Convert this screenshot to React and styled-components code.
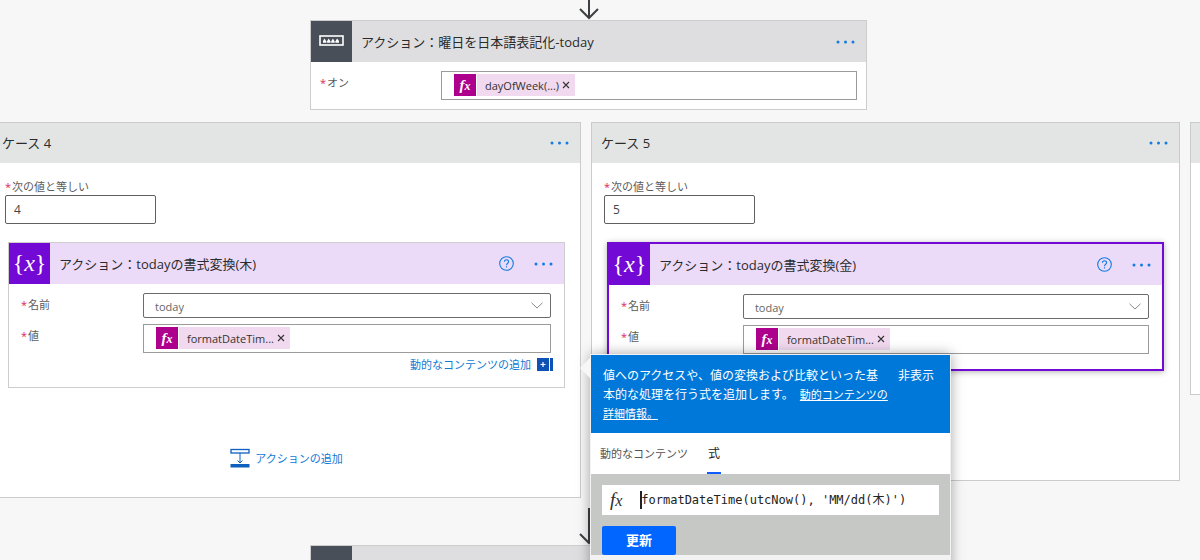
import { useState } from "react";
import styled, { createGlobalStyle, css } from "styled-components";

const GlobalStyle = createGlobalStyle`
  *, *::before, *::after {
    box-sizing: border-box;
  }

  body {
    margin: 0;
    background: #f7f7f7;
    color: #2b2b2b;
    font-family: "Open Sans", "Noto Sans CJK JP", sans-serif;
    font-size: 11px;
  }

  button, input, select {
    font: inherit;
    color: inherit;
  }
`;

const Canvas = styled.main`
  display: flex;
  flex-direction: column;
  height: 100vh;
  overflow: hidden;
`;

const Center = styled.div`
  display: flex;
  flex-direction: column;
  align-items: center;
  flex-shrink: 0;
  padding-right: 23px;
`;

const TopStep = styled.div`
  width: 100%;
  max-width: 557px;
`;

const Arrow = styled.svg`
  display: block;
  width: 20px;
  height: ${(props) => props.$height}px;
  margin-top: ${(props) => props.$gap || 0}px;
  fill: none;
  stroke: #3d3f44;
  stroke-width: 2;
`;

const Cases = styled.section`
  display: flex;
  align-items: flex-start;
  flex-shrink: 0;
  gap: 10px;
  margin: 12px 0 0 -8px;
`;

const CaseBox = styled.article`
  flex: 0 0 calc(49% - 3px);
  min-width: 0;
  border: 1px solid #cbcbcb;
  background: #fff;
`;

const CaseHeader = styled.header`
  display: flex;
  align-items: center;
  justify-content: space-between;
  height: 40px;
  padding: 0 11px 0 9px;
  background: #e3e5e4;
`;

const Title = styled.h2`
  flex: 1;
  margin: 0;
  font-size: 13px;
  font-weight: 400;
  line-height: 20px;
  white-space: nowrap;
`;

const CaseBody = styled.div`
  padding: 16px 15px 28px;
`;

const DefaultBody = styled.div`
  min-height: 231px;
`;

const Condition = styled.div`
  width: 151px;
  margin: 0 0 18px -3px;
`;

const Label = styled.label`
  display: block;
  color: #5c5c5c;
  line-height: ${(props) => props.$line || 24}px;
  white-space: nowrap;

  &::before {
    content: "*";
    margin-right: 1px;
    color: #d9265a;
  }
`;

const TextInput = styled.input`
  display: block;
  width: 100%;
  height: 29px;
  padding: 0 8px;
  border: 1px solid #5f5f5f;
  border-radius: 2px;
  background: #fff;
  color: #444;
  font-size: 12px;
`;

const Card = styled.article`
  position: relative;
  border: 1px solid #cdcdcd;
  background: #fff;

  ${(props) =>
    props.$selected &&
    css`
      border: 2px solid #7209d4;
      box-shadow: 0 1px 6px rgba(0, 0, 0, 0.3);
    `}
`;

const CardHeader = styled.header`
  display: flex;
  align-items: center;
  height: 41px;
  padding-right: 11px;
  background: ${(props) => (props.$purple ? "#ebdbf8" : "#dedee0")};
`;

const CardIcon = styled.div`
  display: flex;
  align-items: center;
  justify-content: center;
  flex-shrink: 0;
  width: 41px;
  height: 41px;
  margin-right: 9px;
  background: ${(props) => (props.$purple ? "#7209d4" : "#484f59")};
  color: #fff;
  font-family: "Liberation Serif", serif;
  font-size: 24px;
  line-height: 30px;
  padding-bottom: 2px;
`;

const IconButton = styled.button`
  display: flex;
  margin: 0 0 0 20px;
  padding: 0;
  border: 0;
  background: none;
  color: #147ce0;
  cursor: pointer;
`;

const CardBody = styled.div`
  display: grid;
  grid-template-columns: ${(props) => props.$labelWidth}px 1fr;
  row-gap: 6px;
  padding: ${(props) => props.$padding};
`;

const SelectWrap = styled.div`
  display: grid;
  align-items: center;

  & > * {
    grid-area: 1 / 1;
  }

  svg {
    justify-self: end;
    margin-right: 8px;
    pointer-events: none;
  }
`;

const Select = styled.select`
  width: 100%;
  height: 25px;
  padding: 2px 11px 0;
  appearance: none;
  border: 1px solid #6b6b6b;
  border-radius: 2px;
  background: #fff;
  color: #666;
`;

const TokenField = styled.div`
  display: flex;
  height: 29px;
  padding: 2px 12px;
  border: 1px solid #9b9b9b;
  background: #fff;
`;

const Token = styled.span`
  display: flex;
  align-items: center;
  height: 22px;
  background: #f1d9ef;
  color: #333;
  white-space: nowrap;
`;

const TokenIcon = styled.span`
  display: flex;
  align-items: center;
  justify-content: center;
  width: 23px;
  height: 22px;
  margin-right: 8px;
  border-right: 1px solid #fff;
  background: #ad008c;
  color: #fff;
`;

const Remove = styled.button`
  display: flex;
  margin: 0 4px 0 2px;
  padding: 1px;
  border: 0;
  background: none;
  cursor: pointer;
`;

const Fx = styled.span`
  font-family: "Liberation Serif", serif;
  font-size: ${(props) => props.$size}px;
  font-style: italic;
  font-weight: ${(props) => (props.$bold ? 700 : 400)};
  line-height: 20px;

  small {
    font-size: ${(props) => props.$size - 3}px;
  }
`;

const AddContent = styled.button`
  display: flex;
  align-items: center;
  gap: 6px;
  grid-column: 1 / -1;
  justify-self: end;
  height: 22px;
  margin: -6px -2px 0 0;
  padding: 0;
  border: 0;
  background: none;
  color: #0f7bd6;
  cursor: pointer;
`;

const AddAction = styled(AddContent)`
  gap: 5px;
  margin: 59px auto 0;
`;

const Popup = styled.aside`
  position: absolute;
  z-index: 5;
  top: 111px;
  left: calc(100% + 26px);
  width: 361px;
  border: 1px solid #f2f2f2;
  background: #f2f2f2;
  box-shadow: 0 0 12px rgba(0, 0, 0, 0.35);

  &::before {
    content: "";
    position: absolute;
    top: 2px;
    left: -11px;
    border: solid transparent;
    border-width: 11px 11px 11px 0;
    border-right-color: #f7f7f7;
  }
`;

const Info = styled.div`
  display: flex;
  align-items: flex-start;
  gap: 8px;
  padding: 11px 16px 10px 12px;
  background: #0078d9;
  color: #fff;
  font-size: 12px;
  line-height: 19px;

  p {
    flex: 1;
    margin: 0;
  }

  a {
    margin-left: 3px;
    color: #fff;
    font-size: 11px;
  }
`;

const Hide = styled.button`
  padding: 0;
  border: 0;
  background: none;
  cursor: pointer;
`;

const Tabs = styled.div`
  display: flex;
  gap: 18px;
  height: 41px;
  padding: 0 8px;
  background: #fff;
`;

const Tab = styled.button`
  padding: 0 1px;
  border: 0;
  border-bottom: 2px solid ${(props) => (props.$active ? "#0f5cff" : "transparent")};
  background: none;
  color: ${(props) => (props.$active ? "#222" : "#555")};
  font-size: ${(props) => (props.$active ? 12 : 11)}px;
  cursor: pointer;
`;

const Editor = styled.div`
  padding: 11px 11px 0;
  background: #c6c8c5;
`;

const Expression = styled.label`
  display: flex;
  align-items: center;
  height: 30px;
  margin-bottom: 11px;
  padding: 0 8px;
  background: #fff;
`;

const Caret = styled.span`
  width: 2px;
  height: 18px;
  margin-left: 18px;
  background: #222;
`;

const ExpressionInput = styled.input`
  flex: 1;
  min-width: 0;
  height: 26px;
  margin-left: -1px;
  padding: 0 0 3px;
  border: 0;
  outline: 0;
  background: none;
  color: #222;
  font-family: "DejaVu Sans Mono", "Noto Sans CJK JP", monospace;
  font-size: 12px;
`;

const Update = styled.button`
  display: block;
  width: 74px;
  height: 29px;
  padding: 0 0 2px;
  border: 0;
  border-radius: 2px;
  background: #0066ff;
  color: #fff;
  font-size: 13px;
  font-weight: 700;
  cursor: pointer;
`;

const PopupFooter = styled.div`
  height: 40px;
`;

function DownArrow({ height, gap }) {
  return (
    <Arrow $height={height} $gap={gap} viewBox={`0 0 20 ${height}`}>
      <path d={`M10 0V${height - 2}M1 ${height - 11}L10 ${height - 2}L19 ${height - 11}`} />
    </Arrow>
  );
}

function MenuButton() {
  return (
    <IconButton aria-label="メニュー">
      <svg width="19" height="4" viewBox="0 0 19 4" fill="currentColor">
        <circle cx="2" cy="2" r="1.5" />
        <circle cx="9.5" cy="2" r="1.5" />
        <circle cx="17" cy="2" r="1.5" />
      </svg>
    </IconButton>
  );
}

function HelpButton() {
  return (
    <IconButton aria-label="ヘルプ">
      <svg width="15" height="15" viewBox="0 0 15 15" fill="none" stroke="currentColor">
        <circle cx="7.5" cy="7.5" r="6.8" strokeWidth="1.1" />
        <path d="M5.4 5.8C5.4 3.1 9.6 3.1 9.6 5.7C9.6 7.2 7.5 7.3 7.5 9.2" strokeWidth="1.1" />
        <path d="M7.5 10.3V11.5" strokeWidth="1.2" />
      </svg>
    </IconButton>
  );
}

function SwitchIcon() {
  return (
    <svg width="25" height="11" viewBox="0 0 25 11">
      <rect x="1" y="1" width="23" height="9" fill="none" stroke="#fff" strokeWidth="1.6" />
      <path
        d="M4 7.8V6L5.5 3.5L7 6L8.2 6L9.7 3.5L11.2 6L12.4 6L13.9 3.5L15.4 6L16.6 6L18.1 3.5L20 6V7.8Z"
        fill="#fff"
      />
      <path d="M7.6 6V8M11.8 6V8M16 6V8" stroke="#484f59" strokeWidth=".7" />
    </svg>
  );
}

function ExpressionToken({ children }) {
  return (
    <Token>
      <TokenIcon>
        <Fx $size={15} $bold>
          f<small>x</small>
        </Fx>
      </TokenIcon>
      {children}
      <Remove aria-label="削除">
        <svg width="8" height="8" viewBox="0 0 8 8" stroke="#333" strokeWidth="1.1">
          <path d="M1 1L7 7M7 1L1 7" />
        </svg>
      </Remove>
    </Token>
  );
}

function AddActionButton() {
  return (
    <AddAction>
      <svg width="20" height="20" viewBox="0 0 20 20" fill="none" stroke="#0f5fc0">
        <rect x="1" y="1.5" width="18" height="3.5" strokeWidth="1.3" />
        <path d="M10 5V15M7.5 12.5L10 15L12.5 12.5" />
        <rect x=".5" y="16" width="19" height="3.5" fill="#0f5fc0" stroke="none" />
      </svg>
      アクションの追加
    </AddAction>
  );
}

function ExpressionPopup() {
  const [expression, setExpression] = useState("formatDateTime(utcNow(), 'MM/dd(木)')");

  return (
    <Popup>
      <Info>
        <p>
          値へのアクセスや、値の変換および比較といった基本的な処理を行う式を追加します。{" "}
          <a href="#details">動的コンテンツの詳細情報。</a>
        </p>
        <Hide>非表示</Hide>
      </Info>
      <Tabs role="tablist">
        <Tab role="tab" aria-selected="false">
          動的なコンテンツ
        </Tab>
        <Tab role="tab" aria-selected="true" $active>
          式
        </Tab>
      </Tabs>
      <Editor>
        <Expression>
          <Fx $size={19}>
            f<small>x</small>
          </Fx>
          <Caret />
          <ExpressionInput
            aria-label="式"
            spellCheck="false"
            value={expression}
            onChange={(e) => setExpression(e.target.value)}
          />
        </Expression>
        <Update>更新</Update>
      </Editor>
      <PopupFooter />
    </Popup>
  );
}

function VariableCard({ id, title, selected, children }) {
  return (
    <Card $selected={selected}>
      <CardHeader $purple>
        <CardIcon $purple>
          {"{"}
          <i>x</i>
          {"}"}
        </CardIcon>
        <Title>{title}</Title>
        <HelpButton />
        <MenuButton />
      </CardHeader>
      <CardBody $labelWidth={122} $padding={selected ? "9px 13px 15px 12px" : "9px 13px 12px 12px"}>
        <Label htmlFor={`name-${id}`}>名前</Label>
        <SelectWrap>
          <Select id={`name-${id}`} defaultValue="today">
            <option>today</option>
          </Select>
          <svg width="12" height="7" viewBox="0 0 12 7" fill="none" stroke="#8a8a8a">
            <path d="M.5 .8L6 6L11.5 .8" />
          </svg>
        </SelectWrap>
        <Label as="span" id={`value-${id}`}>
          値
        </Label>
        <TokenField role="group" aria-labelledby={`value-${id}`}>
          <ExpressionToken>formatDateTim...</ExpressionToken>
        </TokenField>
        {!selected && (
          <AddContent>
            動的なコンテンツの追加
            <svg width="16" height="13" viewBox="0 0 16 13">
              <path d="M0 0H12V13H0ZM13 0H16V13H13Z" fill="#0f52b5" />
              <path d="M3.5 6.5H8.5M6 4V9" stroke="#fff" strokeWidth="1.2" />
            </svg>
          </AddContent>
        )}
      </CardBody>
      {children}
    </Card>
  );
}

function Case({ value, title, selected, children }) {
  return (
    <CaseBox>
      <CaseHeader>
        <Title>ケース {value}</Title>
        <MenuButton />
      </CaseHeader>
      <CaseBody>
        <Condition>
          <Label htmlFor={`case-${value}`} $line={16}>
            次の値と等しい
          </Label>
          <TextInput id={`case-${value}`} defaultValue={value} />
        </Condition>
        <VariableCard id={value} title={title} selected={selected}>
          {children}
        </VariableCard>
        <AddActionButton />
      </CaseBody>
    </CaseBox>
  );
}

function App() {
  return (
    <>
      <GlobalStyle />
      <Canvas>
        <Center>
          <DownArrow height={20} />
          <TopStep>
            <Card>
              <CardHeader>
                <CardIcon>
                  <SwitchIcon />
                </CardIcon>
                <Title>アクション：曜日を日本語表記化-today</Title>
                <MenuButton />
              </CardHeader>
              <CardBody $labelWidth={121} $padding="9px">
                <Label as="span" id="switch-on">
                  オン
                </Label>
                <TokenField role="group" aria-labelledby="switch-on">
                  <ExpressionToken>dayOfWeek(...)</ExpressionToken>
                </TokenField>
              </CardBody>
            </Card>
          </TopStep>
        </Center>

        <Cases>
          <Case value="4" title="アクション：todayの書式変換(木)">
            <ExpressionPopup />
          </Case>
          <Case value="5" title="アクション：todayの書式変換(金)" selected />
          <CaseBox>
            <CaseHeader />
            <DefaultBody />
          </CaseBox>
        </Cases>

        <Center>
          <DownArrow height={37} gap={10} />
          <TopStep>
            <Card>
              <CardHeader>
                <CardIcon />
              </CardHeader>
            </Card>
          </TopStep>
        </Center>
      </Canvas>
    </>
  );
}

export default App;
